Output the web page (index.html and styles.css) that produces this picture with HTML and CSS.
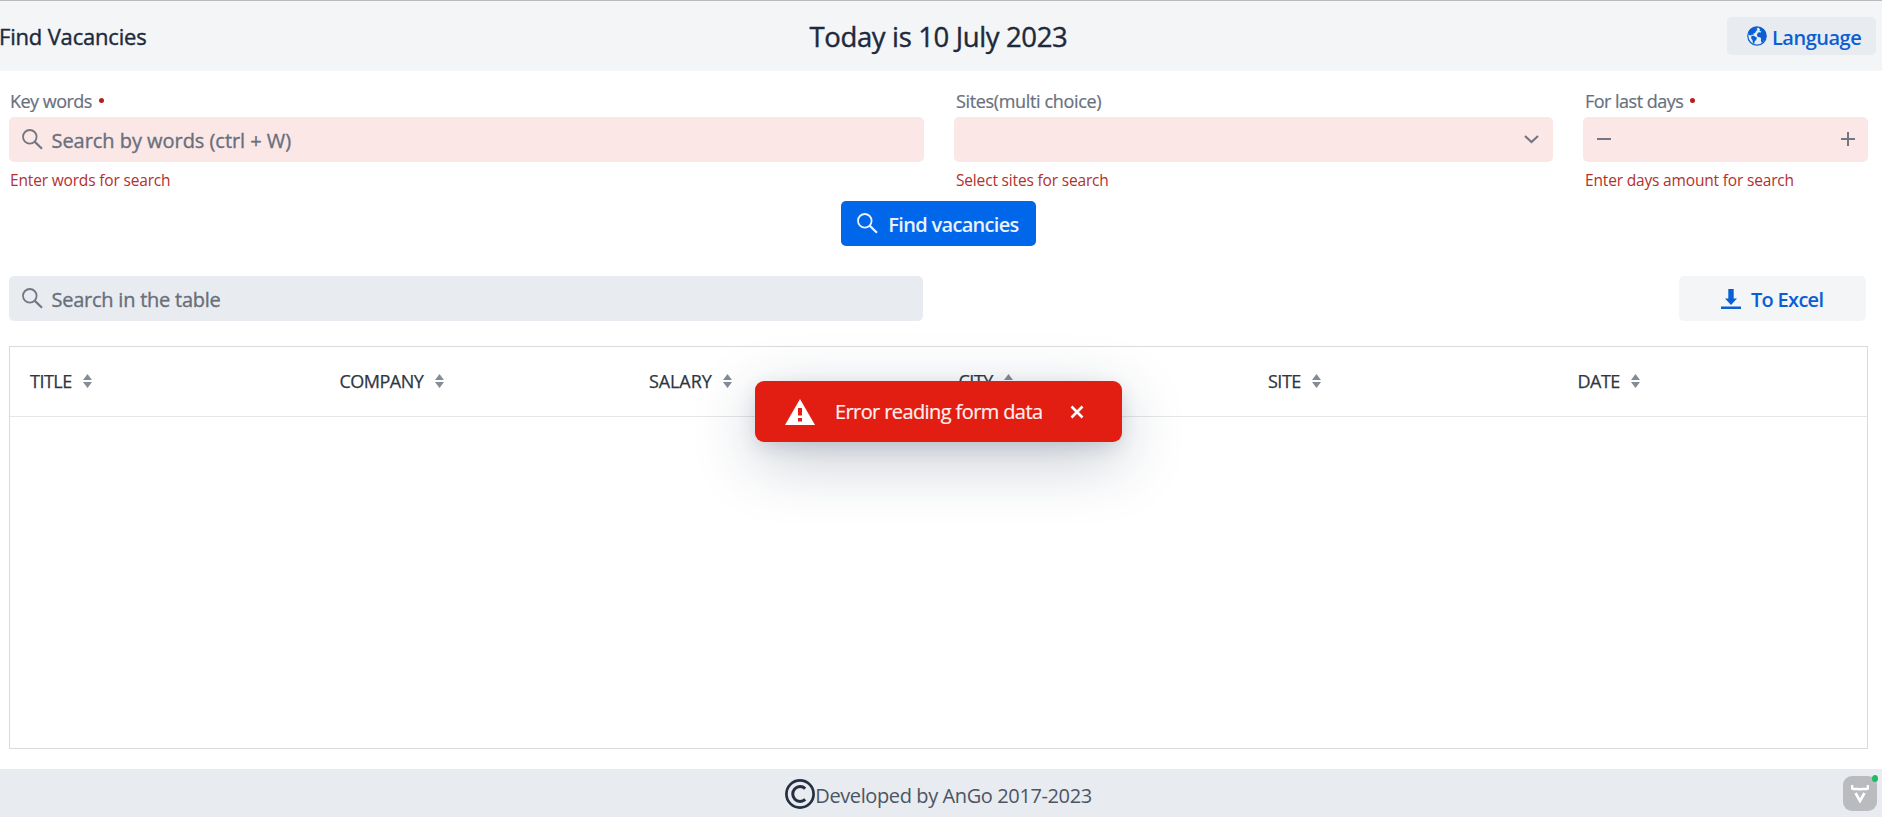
FILE: index.html
```html
<!DOCTYPE html>
<html lang="en">
<head>
<meta charset="utf-8">
<title>Find Vacancies</title>
<link rel="stylesheet" href="styles.css">
</head>
<body>
<svg class="defs" aria-hidden="true">
  <symbol id="search" viewBox="0 0 21 21"><circle cx="7.8" cy="7.8" r="6.8" fill="none" stroke="currentColor" stroke-width="1.8"/><path d="M12.6 12.6 20 19.8" stroke="currentColor" stroke-width="2.2"/></symbol>
  <symbol id="sort" viewBox="0 0 9 14"><path d="M4.5 0 9 6H0zM0 8h9l-4.500 6z" fill="currentColor"/></symbol>
</svg>
<div class="app">
  <header class="top">
    <h1 class="title"><span>Find Vacancies</span></h1>
    <h2 class="today"><span>Today is 10 July 2023</span></h2>
    <div class="top-end">
      <button class="language">
        <svg class="globe" viewBox="0 0 20 20"><circle cx="10" cy="10" r="9.200" fill="none" stroke="currentColor" stroke-width="1.200"/><path d="M1.300 6.500C3 3 6 .8 9.500.8l1.500 1-1.600 1.100 1.200 1.200-1.700 1.200-.8 1.600-2 .8.400 1.500-1.800-.7-.6 1.300L1.500 8.500zM4.500 10l2.200-.3 3.300 2-.8 2.300-1.500 1.300-.5 2.700-1.300-.8-.4-3.200-1.400-1.600zM12.500 1.300c3 .8 5.500 3 6.500 6.200l.2 3.500-1 2.700-1.400.9-.7 1.800-1.500.4-.7-2.300.2-2-1-1.200-2.200-.3-1-2 .9-2.200 1.900-.6 1.300.4.3-1.200-1.800-.6.6-1.400-1-1z" fill="currentColor"/></svg>
        <span>Language</span>
      </button>
    </div>
  </header>
  <main class="content">
    <form class="fields">
      <div class="field">
        <label class="label"><span>Key words</span><i class="dot"></i></label>
        <div class="input invalid"><svg class="search-icon"><use href="#search"/></svg><span class="ph words">Search by words (ctrl + W)</span></div>
        <p class="error"><span>Enter words for search</span></p>
      </div>
      <div class="field">
        <label class="label"><span class="sites">Sites(multi choice)</span></label>
        <div class="input invalid end"><svg class="chevron" viewBox="0 0 15 9"><path d="m1 1 6.500 6L14 1" fill="none" stroke="currentColor" stroke-width="2.200"/></svg></div>
        <p class="error shifted"><span>Select sites for search</span></p>
      </div>
      <div class="field">
        <label class="label shifted"><span>For last days</span><i class="dot"></i></label>
        <div class="input invalid stepper"><svg class="step" viewBox="0 0 14 14"><path d="M0 7h14" stroke="currentColor" stroke-width="2"/></svg><svg class="step" viewBox="0 0 14 14"><path d="M0 7h14M7 0v14" stroke="currentColor" stroke-width="2"/></svg></div>
        <p class="error shifted"><span>Enter days amount for search</span></p>
      </div>
    </form>
    <div class="submit-row"><button class="find"><svg class="search-icon"><use href="#search"/></svg><span>Find vacancies</span></button></div>
    <div class="tools">
      <div class="input filter"><svg class="search-icon"><use href="#search"/></svg><span class="ph">Search in the table</span></div>
      <button class="excel"><svg class="download" viewBox="0 0 20 20"><path d="M7.300 0h5.400v9.500H16l-6 6.500-6-6.500h3.300zM0 17.600h20V20H0z" fill="currentColor"/></svg><span>To Excel</span></button>
    </div>
    <section class="grid">
      <div class="grid-head">
        <div class="col"><span>TITLE</span><svg class="sort"><use href="#sort"/></svg></div>
        <div class="col"><span>COMPANY</span><svg class="sort"><use href="#sort"/></svg></div>
        <div class="col salary"><span>SALARY</span><svg class="sort"><use href="#sort"/></svg></div>
        <div class="col"><span>CITY</span><svg class="sort"><use href="#sort"/></svg></div>
        <div class="col"><span>SITE</span><svg class="sort"><use href="#sort"/></svg></div>
        <div class="col"><span>DATE</span><svg class="sort"><use href="#sort"/></svg></div>
      </div>
    </section>
  </main>
  <footer class="footer">
    <svg class="copyright" viewBox="0 0 30 30"><circle cx="15" cy="15" r="13.600" fill="none" stroke="currentColor" stroke-width="2.700"/><path d="M20.200 9.600A7.400 7.400 0 1 0 20.200 20.400" fill="none" stroke="currentColor" stroke-width="3"/></svg>
    <span>Developed by AnGo 2017-2023</span>
  </footer>
</div>
<div class="toast">
  <svg class="warn" viewBox="0 0 30 26"><path d="M15 0 30 26H0z" fill="#fff"/><path d="M13 9h4v7.500h-4zM13 19h4v3.500h-4z" fill="#e21d12"/></svg>
  <span>Error reading form data</span>
  <svg class="close" viewBox="0 0 14 14"><path d="m1.500 1.500 11 11M12.500 1.500l-11 11" stroke="#fff" stroke-width="2.600"/></svg>
</div>
<div class="devtools">
  <svg class="deer" viewBox="0 0 18 18"><path d="M1 0v2.500q0 1.500 1.500 1.500H7q2 0 2 1.500Q9 4 11 4h4.500Q17 4 17 2.500V0M4.500 8 9 16l4.500-8" fill="none" stroke="#fff" stroke-width="2.600"/></svg>
  <i class="status"></i>
</div>
</body>
</html>
```
FILE: styles.css
```css
* { box-sizing: border-box; }
body { margin: 0; font-family: "Open Sans", "Noto Sans", sans-serif; color: #1e2a3c; background: #fff; overflow: hidden; }
h1, h2, p { margin: 0; }
button { border: 0; padding: 0; font: inherit; }
span { white-space: nowrap; }
svg { display: block; flex: none; }
.defs { position: absolute; width: 0; height: 0; }
.app { width: 1882px; height: 817px; display: flex; flex-direction: column; }
.top { height: 71px; border-top: 1px solid #b9babf; background: #f3f5f7; display: grid; grid-template-columns: 1fr auto 1fr; align-items: center; padding-right: 6px; }
.title { font-size: 22px; font-weight: 400; line-height: 30px; letter-spacing: -0.180px; -webkit-text-stroke: 0.400px; padding-bottom: 1px; margin-left: -1px; }
.today { font-size: 27.500px; font-weight: 400; line-height: 36px; letter-spacing: -0.360px; -webkit-text-stroke: 0.400px; padding: 1px 0 0 1px; }
.top-end { display: flex; justify-content: flex-end; }
.language { width: 149px; height: 38px; margin-bottom: 1px; border-radius: 5px; background: #e8ebef; color: #0b5fd4; display: flex; align-items: center; padding-left: 20px; gap: 5px; font-size: 20px; font-weight: 600; letter-spacing: -0.500px; }
.language span { padding-top: 3px; }
.globe { width: 20px; height: 20px; }
.content { flex: 1; padding: 18px 14px 0 9px; display: flex; flex-direction: column; }
.fields { display: grid; grid-template-columns: 915px 599px 285px; gap: 30px; height: 112px; }
.label { height: 28px; padding: 0 0 5px 1px; display: flex; align-items: center; color: #69707d; font-size: 18px; letter-spacing: -0.520px; line-height: 24px; -webkit-text-stroke: 0.200px; }
.sites { letter-spacing: -0.350px; padding-left: 1px; }
.dot { width: 5px; height: 5px; border-radius: 50%; background: #b3201c; margin-left: 7px; }
.input { height: 45px; border-radius: 5px; display: flex; align-items: center; padding: 0 13px 1px 12.500px; color: #747783; }
.invalid { background: #fbe7e6; }
.end { justify-content: flex-end; padding-right: 14px; }
.stepper { justify-content: space-between; padding-left: 13.500px; }
.step { width: 14px; height: 14px; }
.chevron { width: 15px; height: 9px; }
.search-icon { width: 21px; height: 21px; }
.ph { margin-left: 9px; padding-top: 2px; font-size: 20px; letter-spacing: -0.240px; -webkit-text-stroke: 0.350px; color: #696f7b; }
.words { letter-spacing: -0.040px; }
.error { padding: 7px 0 0 1px; font-size: 15.500px; line-height: 22px; letter-spacing: -0.170px; color: #b3302c; }
.shifted { padding-left: 2px; }
.submit-row { display: flex; justify-content: center; height: 45px; }
.find { width: 195px; height: 45px; border-radius: 5px; background: #0066ea; color: #e9f2ff; display: flex; align-items: center; justify-content: center; gap: 10px; padding-right: 1px; font-size: 20px; font-weight: 600; letter-spacing: -0.680px; }
.find span, .excel span { padding-top: 2px; }
.tools { display: flex; justify-content: space-between; padding: 30px 2px 0 0; height: 100px; }
.filter { width: 914px; background: #e8ebef; }
.excel { width: 187px; height: 45px; border-radius: 5px; background: #f3f5f7; color: #0b5fd4; display: flex; align-items: center; padding-left: 42px; gap: 10px; font-size: 20px; font-weight: 600; letter-spacing: -0.700px; }
.download { width: 20px; height: 20px; }
.grid { height: 403px; border: 1px solid #d9dbdd; }
.grid-head { height: 70px; display: grid; grid-template-columns: repeat(6, 309.500px); border-bottom: 1px solid #e4e6e8; }
.col { display: flex; align-items: center; gap: 11.500px; padding: 0 0 1px 20px; color: #2d3643; font-size: 18px; letter-spacing: -0.500px; -webkit-text-stroke: 0.250px; }
.salary { letter-spacing: -0.100px; }
.sort { width: 9px; height: 14px; color: #858c96; }
.footer { height: 48px; background: #e8ebef; display: flex; justify-content: center; align-items: center; padding-right: 5px; }
.footer span { font-size: 20px; letter-spacing: -0.390px; padding-top: 5px; color: #4b5564; }
.copyright { width: 30px; height: 30px; margin-top: 2px; color: #253042; }
.toast { position: absolute; left: 755px; top: 381px; width: 367px; height: 61px; border-radius: 9px; background: #e21d12; color: #fff0ee; display: flex; align-items: center; padding-left: 30px; box-shadow: 0 18px 64px -2px rgba(28, 48, 78, .28), 0 6px 20px -4px rgba(28, 48, 78, .2); font-size: 20px; letter-spacing: -0.600px; -webkit-text-stroke: 0.200px; }
.warn { width: 30px; height: 26px; margin-right: 20px; }
.close { width: 14px; height: 14px; margin-left: 28px; }
.devtools { position: absolute; left: 1843px; top: 776px; width: 34px; height: 35px; border-radius: 9px; background: #b9bbbf; display: flex; justify-content: center; align-items: center; }
.deer { width: 18px; height: 18px; }
.status { position: absolute; right: -1px; top: -1px; width: 6px; height: 7px; border-radius: 50%; background: #1fbd62; }
```
